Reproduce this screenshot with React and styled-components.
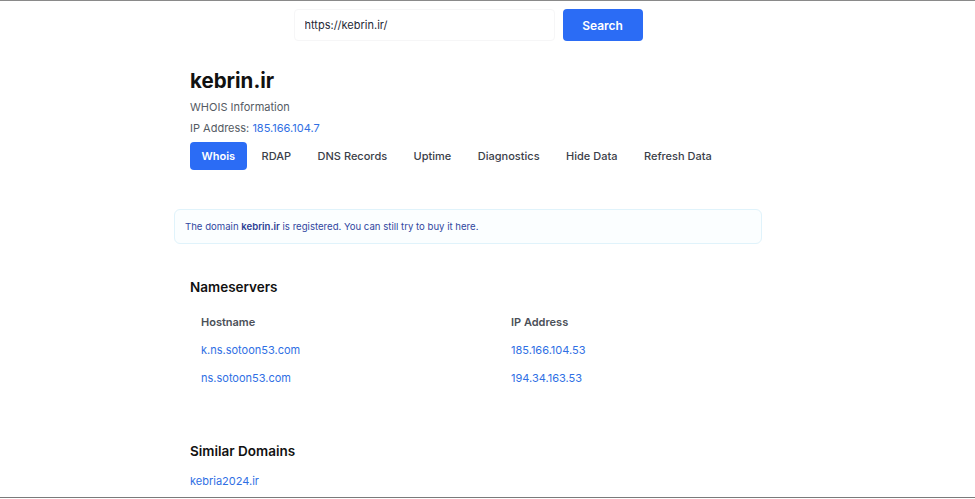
import React from "react";
import styled, { createGlobalStyle } from "styled-components";

const Global = createGlobalStyle`
  * { box-sizing: border-box; }
  html, body { margin: 0; padding: 0; background: #fff; }
  body { font-family: Inter, "Noto Sans", Arial, sans-serif; color: #111827; }
`;

const Frame = styled.div`
  height: 498px;
  overflow: hidden;
  border-top: 1px solid #8a8a8a;
  border-bottom: 1px solid #7a7a7a;
`;

const Wrapper = styled.div`
  width: 588px;
  margin-left: 174px;
`;

const SearchForm = styled.form`
  display: flex;
  justify-content: center;
  gap: 8px;
  padding-top: 8px;
`;

const Input = styled.input`
  width: 261px;
  height: 32px;
  border: 1px solid #f6f6f7;
  border-radius: 4px;
  padding: 0 10px;
  font-family: Inter, Arial, sans-serif;
  font-size: 11px;
  color: #1f2937;
  outline: none;
`;

const Button = styled.button`
  width: 80px;
  height: 32px;
  border: none;
  border-radius: 4px;
  background: #2b6cf5;
  color: #fff;
  font-family: Inter, Arial, sans-serif;
  font-size: 12px;
  font-weight: 600;
`;

const Section = styled.section`
  padding: 0 16px;
  margin-top: ${(p) => p.$top || 0}px;
`;

const Title = styled.h1`
  margin: 0;
  font-size: 20.5px;
  line-height: 28px;
  font-weight: 700;
  color: #111111;
`;

const Sub = styled.p`
  margin: ${(p) => p.$top || 0}px 0 0;
  font-size: 11px;
  line-height: 20px;
  color: #555b63;
`;

const Link = styled.a`
  color: #2f6fe4;
  text-decoration: none;
`;

const Tabs = styled.nav`
  display: flex;
  gap: 3.5px;
  margin-top: 4px;
`;

const Tab = styled.button`
  flex-shrink: 0;
  white-space: nowrap;
  height: 28px;
  padding: 0 11.5px;
  border: none;
  border-radius: 4px;
  background: ${(p) => (p.$active ? "#2b6cf5" : "transparent")};
  color: ${(p) => (p.$active ? "#ffffff" : "#3b4049")};
  font-family: Inter, Arial, sans-serif;
  font-size: 11px;
  font-weight: ${(p) => (p.$active ? 600 : 500)};
`;

const Alert = styled.div`
  margin-top: 39px;
  height: 35px;
  display: flex;
  align-items: center;
  padding: 0 10px;
  border: 1px solid #e0f3fb;
  border-radius: 6px;
  background: #fbfeff;
  font-size: 9.6px;
  color: #3147a0;
  strong { font-weight: 600; color: #2b3f94; }
`;

const Heading = styled.h2`
  margin: 0;
  font-size: 13.5px;
  line-height: 20px;
  font-weight: 600;
  color: #111111;
`;

const Table = styled.table`
  margin-top: 11px;
  border-collapse: collapse;
  font-size: 11px;
  th, td { height: 28px; padding: 0 11px; text-align: left; }
  th { font-weight: 600; color: #4b5058; }
  th:first-child, td:first-child { width: 310px; }
`;

const DomainList = styled.ul`
  list-style: none;
  margin: 9px 0 0;
  padding: 0;
  font-size: 11px;
  li { line-height: 22px; }
`;

const servers = [
  ["k.ns.sotoon53.com", "185.166.104.53"],
  ["ns.sotoon53.com", "194.34.163.53"],
];

const tabs = ["Whois", "RDAP", "DNS Records", "Uptime", "Diagnostics", "Hide Data", "Refresh Data"];

export default function App() {
  return (
    <>
      <Global />
      <Frame>
        <Wrapper>
          <SearchForm onSubmit={(e) => e.preventDefault()}>
            <Input defaultValue="https://kebrin.ir/" />
            <Button type="submit">Search</Button>
          </SearchForm>

          <Section $top={26}>
            <Title>kebrin.ir</Title>
            <Sub $top={2}>WHOIS Information</Sub>
            <Sub $top={1}>
              IP Address: <Link href="#">185.166.104.7</Link>
            </Sub>
            <Tabs>
              {tabs.map((t, i) => (
                <Tab key={t} $active={i === 0}>{t}</Tab>
              ))}
            </Tabs>
          </Section>

          <Alert>
            <span>
              The domain <strong>kebrin.ir</strong> is registered. You can still try to buy it here.
            </span>
          </Alert>

          <Section $top={33}>
            <Heading>Nameservers</Heading>
            <Table>
              <thead>
                <tr>
                  <th>Hostname</th>
                  <th>IP Address</th>
                </tr>
              </thead>
              <tbody>
                {servers.map(([h, ip]) => (
                  <tr key={h}>
                    <td><Link href="#">{h}</Link></td>
                    <td><Link href="#">{ip}</Link></td>
                  </tr>
                ))}
              </tbody>
            </Table>
          </Section>

          <Section $top={49}>
            <Heading>Similar Domains</Heading>
            <DomainList>
              <li><Link href="#">kebria2024.ir</Link></li>
              <li><Link href="#">kebrin2.net</Link></li>
            </DomainList>
          </Section>
        </Wrapper>
      </Frame>
    </>
  );
}
